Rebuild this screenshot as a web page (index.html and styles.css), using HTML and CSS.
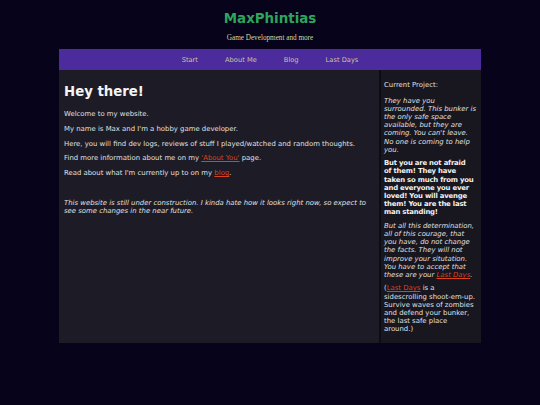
FILE: index.html
```html
<!DOCTYPE html>
<html>
<head>
<meta charset="utf-8">
<link rel="stylesheet" href="styles.css">
</head>
<body>
<header class="site-header">
  <h1 class="site-title">MaxPhintias</h1>
  <p class="site-sub">Game Development and more</p>
</header>
<div class="wrap">
  <nav class="nav">
    <a href="#">Start</a>
    <a href="#">About Me</a>
    <a href="#">Blog</a>
    <a href="#">Last Days</a>
  </nav>
  <div class="body">
    <main class="main">
      <h2 class="hello">Hey there!</h2>
      <p>Welcome to my website.</p>
      <p>My name is Max and I'm a hobby game developer.</p>
      <p>Here, you will find dev logs, reviews of stuff I played/watched and random thoughts.</p>
      <p>Find more information about me on my <a class="link" href="#">'About You'</a> page.</p>
      <p>Read about what I'm currently up to on my <a class="link" href="#">blog</a>.</p>
      <p>&nbsp;</p>
      <p class="note">This website is still under construction. I kinda hate how it looks right now, so expect to see some changes in the near future.</p>
    </main>
    <aside class="side">
      <p class="label">Current Project:</p>
      <p class="it">They have you surrounded. This bunker is the only safe space available, but they are coming. You can't leave. No one is coming to help you.</p>
      <p class="bd">But you are not afraid<br>of them! They have<br>taken so much from you and everyone you ever loved! You will avenge them! You are the last man standing!</p>
      <p class="it">But all this determination, all of this courage, that you have, do not change the facts. They will not improve your situtation. You have to accept that these are your <a class="link" href="#">Last Days</a>.</p>
      <p>(<a class="link" href="#">Last Days</a> is a sidescrolling shoot-em-up. Survive waves of zombies and defend your bunker, the last safe place around.)</p>
    </aside>
  </div>
</div>
</body>
</html>
```
FILE: styles.css
```css
html, body {
  margin: 0;
  padding: 0;
  background: #07031a;
}
body {
  font-family: "DejaVu Sans", Verdana, sans-serif;
  font-size: 6.9px;
  color: #e0e0e0;
}
.site-header {
  text-align: center;
  padding-top: 11px;
  height: 49px;
  box-sizing: border-box;
}
.site-title {
  margin: 0;
  font-size: 13.4px;
  font-weight: bold;
  color: #2ea55c;
  line-height: 16px;
}
.site-sub {
  margin: 7px 0 0;
  font-family: "Liberation Serif", "Times New Roman", serif;
  font-size: 7.2px;
  color: #d8d8a0;
}
.wrap {
  width: 422px;
  margin: 0 auto;
}
.nav {
  background: #4c2b9c;
  height: 21px;
  display: flex;
  justify-content: center;
  align-items: center;
  gap: 27px;
}
.nav a {
  color: #cbc3a0;
  text-decoration: none;
  font-size: 6.7px;
}
.body {
  display: flex;
  background: #1d1b25;
}
.main {
  flex: 1;
  padding: 4px 5px 10px;
}
.main p {
  margin: 6.6px 0;
  line-height: 8.2px;
}
.hello {
  font-size: 13.3px;
  font-weight: bold;
  color: #f4f4f4;
  margin: 10px 0 10px;
  line-height: 16px;
}
.note {
  font-style: italic;
}
.link {
  color: #d8441f;
  text-decoration: underline;
}
.side {
  width: 93px;
  flex: none;
  background: #18161f;
  border-left: 2px solid #0d0b13;
  padding: 5.4px 4px 4px 3px;
}
.side p {
  margin: 5.2px 0;
  line-height: 8.2px;
}
.side .label {
  margin-bottom: 7.8px;
}
.side .it {
  font-style: italic;
}
.side .bd {
  font-weight: bold;
  color: #f2f2f2;
  letter-spacing: -0.2px;
}
```
